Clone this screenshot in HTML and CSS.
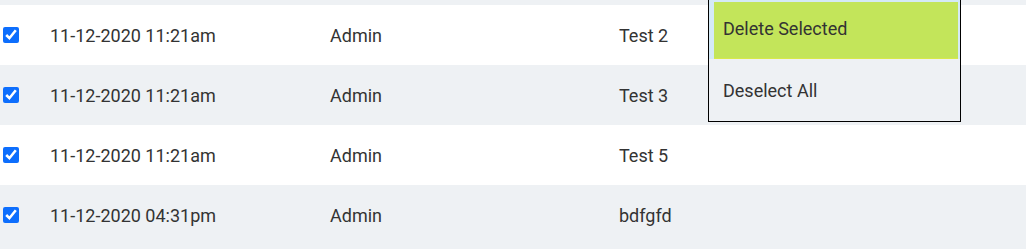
FILE: index.html
```html
<!DOCTYPE html>
<html lang="en">
<head>
  <meta charset="UTF-8">
  <meta name="viewport" content="width=device-width, initial-scale=1">
  <title>Notes</title>
  <link rel="stylesheet" href="styles.css">
</head>
<body>

  <div class="table">
    <div class="row row-top"></div>
    <div class="row">
      <div class="cell check"><input type="checkbox" checked></div>
      <div class="cell date">11-12-2020 11:21am</div>
      <div class="cell user">Admin</div>
      <div class="cell title">Test 2</div>
    </div>
    <div class="row">
      <div class="cell check"><input type="checkbox" checked></div>
      <div class="cell date">11-12-2020 11:21am</div>
      <div class="cell user">Admin</div>
      <div class="cell title">Test 3</div>
    </div>
    <div class="row">
      <div class="cell check"><input type="checkbox" checked></div>
      <div class="cell date">11-12-2020 11:21am</div>
      <div class="cell user">Admin</div>
      <div class="cell title">Test 5</div>
    </div>
    <div class="row row-last">
      <div class="cell check"><input type="checkbox" checked></div>
      <div class="cell date">11-12-2020 04:31pm</div>
      <div class="cell user">Admin</div>
      <div class="cell title">bdfgfd</div>
    </div>

    <div class="menu">
      <div class="menu-item active"><span>Delete Selected</span></div>
      <div class="menu-item"><span>Deselect All</span></div>
    </div>
  </div>

</body>
</html>
```

FILE: styles.css
```css
body {
  font-family: Roboto, "Liberation Sans", sans-serif;
  margin: 0;
  background-color: #ffffff;
  color: #333;
}

.table {
  position: relative;
}

.row {
  display: grid;
  grid-template-columns: 50px 280px 289px 1fr;
  align-items: center;
  height: 60px;
  font-size: 18px;
}

.row:nth-child(odd) {
  background: #eef1f4;
}

.row-top {
  height: 5px;
}

.row-last {
  padding-bottom: 10px;
}

.check {
  padding-left: 3px;
  display: flex;
  align-items: center;
}

.check input {
  width: 16px;
  height: 16px;
  margin: 0;
  accent-color: #0d6efd;
}

.menu {
  position: absolute;
  top: -2px;
  left: 708px;
  width: 251px;
  background: #eef1f4;
  border: 1px solid #000;
  font-size: 18px;
}

.menu-item {
  height: 62px;
  display: flex;
  padding-left: 5px;
}

.menu-item span {
  flex: 1;
  display: flex;
  align-items: center;
  padding-left: 9px;
  padding-top: 1px;
}

.menu-item.active {
  height: 60px;
  background: #d5eaf6;
  padding: 3px 2px 0 5px;
  box-sizing: border-box;
}

.menu-item.active span {
  background: #c3e55a;
  border-bottom: 1px solid #d8e84a;
  padding-top: 0;
  padding-bottom: 3px;
}
```
